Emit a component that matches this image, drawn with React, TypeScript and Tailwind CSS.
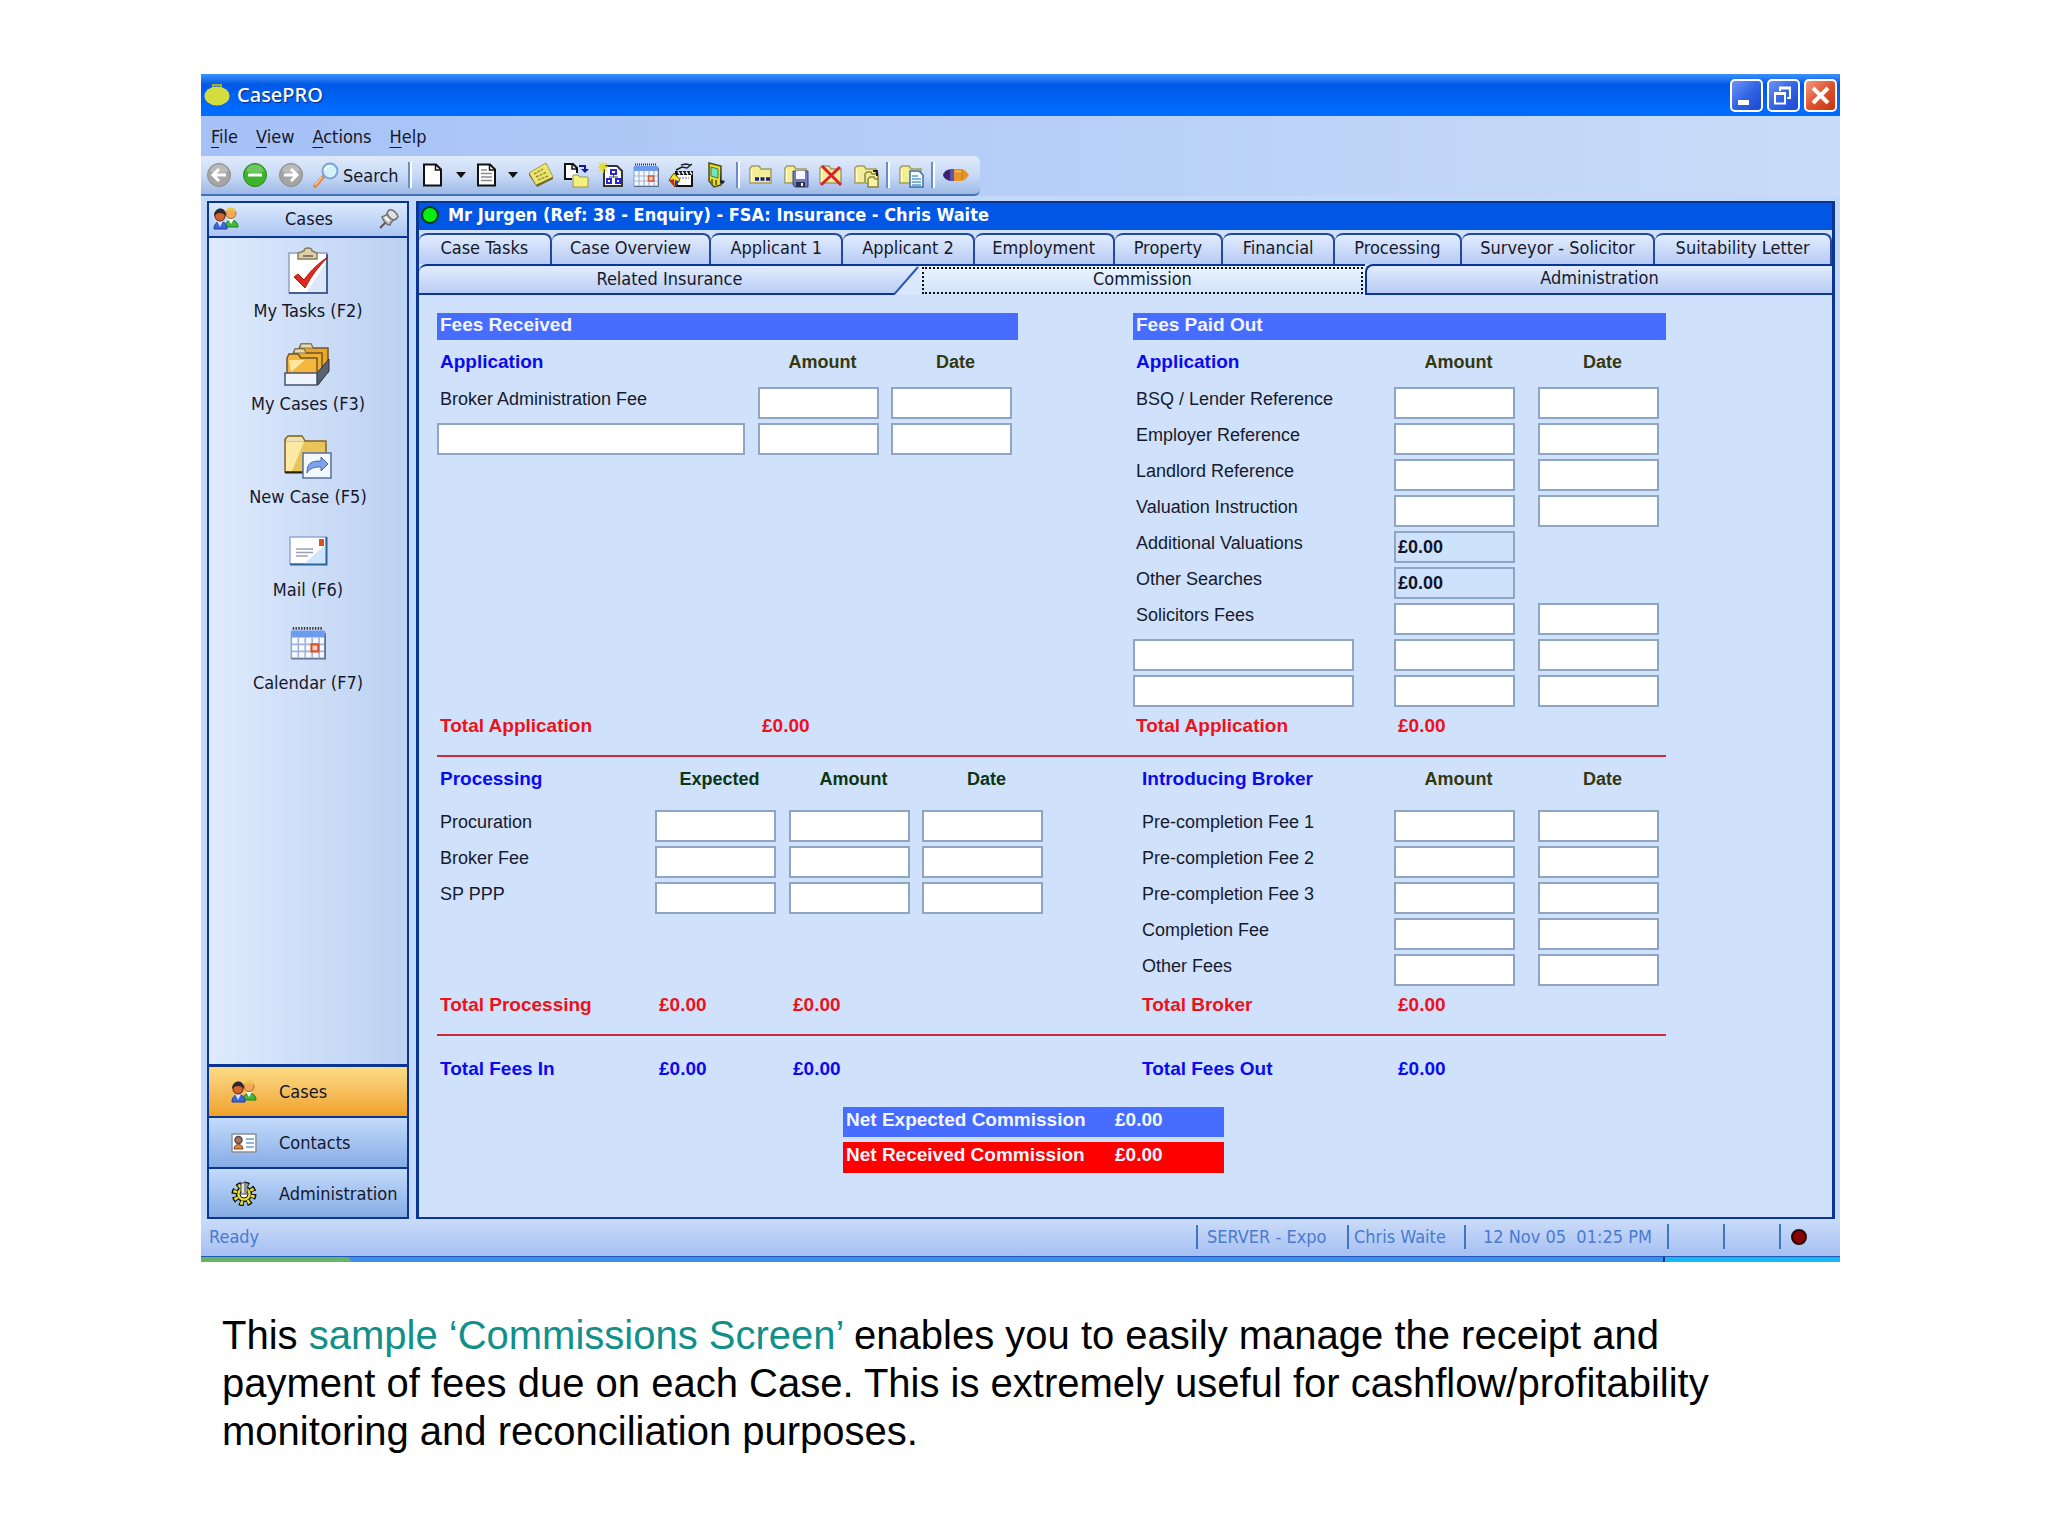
import type { ReactNode } from 'react';

const amountBox = 'h-8 w-full border-2 border-[#8ea6c4] bg-white px-1 text-[18px] font-bold text-[#10132a] outline-none';

const Svg = ({ size = 26, box = 26, children }: { size?: number; box?: number; children: ReactNode }) => (
    <svg width={size} height={size} viewBox={`0 0 ${box} ${box}`} fill="none" aria-hidden="true">
        {children}
    </svg>
);

const RoundIcon = ({ color, edge, d }: { color: string; edge: string; d: string }) => (
    <Svg>
        <circle cx="13" cy="13" r="11.500" fill={color} stroke={edge} strokeWidth="1" />
        <path d="M4 9a9.500 9.500 0 0 1 18 0c-5 3-12 3-18 0z" fill="#fff" opacity=".25" />
        <path d={d} stroke="#fff" strokeWidth="3" />
    </Svg>
);

const SearchIcon = () => (
    <Svg>
        <path d="M2 24l8-9" stroke="#e08a45" strokeWidth="4" strokeLinecap="round" />
        <path d="M2 23l7-8" stroke="#f8c79a" strokeWidth="1.500" />
        <circle cx="17" cy="9" r="7.500" fill="#d3f1fd" stroke="#7ea3d8" strokeWidth="2" />
        <path d="M12 8a5 5 0 0 1 5-4" stroke="#fff" strokeWidth="2" />
    </Svg>
);

const PageIcon = ({ lines }: { lines?: boolean }) => (
    <Svg>
        <path d="M4 2.500h12l5 5v16H4z" fill="#fff" stroke="#111" strokeWidth="2" />
        <path d="M15.500 3v5h5" stroke="#111" strokeWidth="1.500" />
        {lines && <path d="M7 8h6M7 11.500h11M7 15h11M7 18.500h11" stroke="#8c8c8c" strokeWidth="1.500" />}
    </Svg>
);

const NoteIcon = () => (
    <Svg>
        <path d="M1 11L18 1l7 14L8 23z" fill="#ece66c" stroke="#a39c45" strokeWidth="1" />
        <path d="M1 11l7 12 17-8v2L9 25 1 13z" fill="#6f692b" />
        <path d="M6 12l9-5M8 15l11-5M10 18l10-4" stroke="#96903d" strokeWidth="1.500" strokeDasharray="3 1" />
    </Svg>
);

const MoveIcon = () => (
    <Svg>
        <path d="M9 17H2V2h8l4 4v5" fill="#fff" stroke="#111" strokeWidth="2" />
        <path d="M9 2v5h5" stroke="#111" strokeWidth="1.500" />
        <path d="M16 4h6v3" stroke="#17179a" strokeWidth="2" />
        <path d="M18 7h8l-4 4z" fill="#17179a" />
        <path d="M10 13h5l2 2h8v10H10z" fill="#f5f07c" stroke="#9c964a" strokeWidth="1" />
    </Svg>
);

const DiagramIcon = () => (
    <Svg>
        <path d="M6 4h13l5 5v15H6z" fill="#fff" stroke="#333" strokeWidth="2" />
        <path d="M13 8h5v4h-5zM9 17h4v4H9zM18 17h4v4h-4z" stroke="#2929c9" strokeWidth="2" />
        <path d="M15.500 12v3M11 15h9" stroke="#444" />
        <path d="M5 0v11M0 5h10M1 1l8 8M9 1L1 9" stroke="#e2d92c" strokeWidth="1.500" />
    </Svg>
);

const CalendarIcon = ({ size = 26 }: { size?: number }) => (
    <Svg size={size}>
        <path d="M1 5h24v19H1z" fill="#f8faff" stroke="#86a0cd" strokeWidth="1" />
        <path d="M1 4h24v5H1z" fill="#6f9bee" />
        <path d="M2 2.500h22" stroke="#333" strokeWidth="2" strokeDasharray="1 1" />
        <path d="M1 14h24M1 19h24M6 9v15M11 9v15M16 9v15M21 9v15" stroke="#9fb5dc" strokeWidth="1.200" />
        <path d="M15.500 14h5v5h-5z" fill="#f6d5c8" stroke="#d9532c" strokeWidth="1.600" />
        <path d="M1 24.500h24.500V6" stroke="#5f6e8c" />
    </Svg>
);

const ClapperIcon = () => (
    <Svg>
        <path d="M8 12h16v12H9z" fill="#fff" stroke="#111" strokeWidth="2" />
        <path d="M7 9h18v4H7z" fill="#111" />
        <path d="M10 9.500l2 3M14 9.500l2 3M18 9.500l2 3M22 9.500l2 3" stroke="#fff" strokeWidth="1.500" />
        <path d="M8 8l6-3 5 1 5-4M13 3l5-1 4 1" stroke="#222" strokeWidth="1.500" />
        <path d="M11 16h10" stroke="#999" strokeWidth="1.500" strokeDasharray="2 1" />
        <path d="M6 11l6 7-5 7-6-7z" fill="#f4e422" stroke="#5d5410" />
        <path d="M1 18l5-1 1 8z" fill="#d4222a" />
        <path d="M7 18l4 1-4 6z" fill="#2634c6" />
    </Svg>
);

const DoorIcon = () => (
    <Svg>
        <path d="M6 1l12 3v19l-7 2-5-6z" fill="#e8dc2e" stroke="#4d4916" strokeWidth="1.500" />
        <path d="M8 5l7 2v9l-7-2z" fill="#72e4c8" stroke="#38833f" />
        <path d="M18 4v14l4 1-2 3-3-1z" fill="#222" />
        <path d="M9 17v5M13 18v5" stroke="#77701b" strokeWidth="2" />
    </Svg>
);

const FolderIcon = ({ children }: { children: ReactNode }) => (
    <Svg>
        <path d="M2 21V6l2-2h7l2 3h10v14z" fill="#f3ee96" stroke="#a39c5c" strokeWidth="1.500" />
        <path d="M3.500 20V7" stroke="#fffde0" strokeWidth="1.500" />
        {children}
    </Svg>
);

const PencilIcon = () => (
    <Svg>
        <path d="M0 13c1-4 5-6 10-6v12c-5 0-9-2-10-6z" fill="#3a2375" />
        <path d="M7 7h4v12H7z" fill="#6650ad" />
        <path d="M11 7h8c4 1 5 4 7 6-2 2-3 5-7 6h-8z" fill="#e6952a" />
        <path d="M12 9.500h7" stroke="#f7c67a" strokeWidth="1.500" />
        <path d="M19 8v10" stroke="#c77816" />
    </Svg>
);

const PeopleIcon = () => (
    <Svg>
        <path d="M12 21c0-9 13-9 13 0z" fill="#3fb83b" stroke="#1e7c22" />
        <path d="M15 13l3 5 3-5z" fill="#fff" />
        <circle cx="18" cy="7.500" r="5" fill="#f3a95b" stroke="#b06a1d" />
        <path d="M13 6c0-6 10-6 10 0-3-2-7-2-10 0z" fill="#efc544" />
        <path d="M1 23c0-10 13-10 13 0z" fill="#3e67dc" stroke="#1c3ba0" />
        <path d="M4 15l3 6 3-6z" fill="#d6e2ff" />
        <circle cx="7" cy="10" r="5" fill="#d4652b" stroke="#5d1f10" />
        <path d="M1 10c0-10 13-10 12 0-3-4-9-4-12 0z" fill="#2d2730" />
    </Svg>
);

const PinIcon = () => (
    <svg width="20" height="20" viewBox="0 0 20 20" fill="none" aria-hidden="true">
        <path d="M1 19l6-6" stroke="#555" strokeWidth="2" />
        <path d="M3 8c3-2 6-2 8-5l6 7c-4 1-5 3-6 6-3 0-6-3-8-8z" fill="#c0c4c0" stroke="#6d716f" strokeWidth="1.500" />
        <path d="M10 1c4-1 8 3 9 7l-4 3c-4-1-6-4-7-7z" fill="#dfe2df" stroke="#6d716f" strokeWidth="1.500" />
        <path d="M6 8l4 4" stroke="#fff" strokeWidth="2" />
    </svg>
);

const ContactIcon = () => (
    <Svg>
        <path d="M1 4h24v18H1z" fill="#fff" stroke="#8d8f96" strokeWidth="1.500" />
        <circle cx="7.500" cy="10" r="3.500" fill="#b0705a" stroke="#4d4c50" strokeWidth="1.500" />
        <path d="M3 19c0-6 9-6 9 0z" fill="#dd8340" stroke="#774624" />
        <path d="M15 9h8M15 13h8M15 17h8" stroke="#6f9fd0" strokeWidth="1.500" />
    </Svg>
);

const GearIcon = () => (
    <Svg>
        <circle cx="13" cy="14" r="9.500" stroke="#111" strokeWidth="6" strokeDasharray="4.500 2.960" />
        <circle cx="13" cy="14" r="7.500" fill="#e6df2c" stroke="#111" strokeWidth="1.500" />
        <circle cx="13" cy="14" r="9" stroke="#e6df2c" strokeWidth="4" strokeDasharray="2.500 4.570" strokeDashoffset="-1" />
        <circle cx="13" cy="14" r="4" fill="#fff" stroke="#111" />
        <path d="M10 3h6v11h-6z" fill="#e4e7ea" stroke="#444" />
        <path d="M14 3v11" stroke="#8b8f94" strokeWidth="2" />
    </Svg>
);

const TasksIcon = () => (
    <Svg size={48} box={48}>
        <path d="M5 6h38v40H5z" fill="#fff" stroke="#8ea0c2" strokeWidth="1.500" />
        <path d="M7 46h36V14L22 46z" fill="#dce7f8" />
        <path d="M43 7v39H5" stroke="#44618f" strokeWidth="2" />
        <path d="M14 12V6l6-2c0-4 8-4 8 0l5 2v6z" fill="#ded1a6" stroke="#857b5e" strokeWidth="1.500" />
        <path d="M19 9h10" stroke="#857b5e" strokeWidth="2" />
        <path d="M10 30l4-3 6 6C27 23 36 15 44 10c-9 9-17 19-23 31z" fill="#e02a1f" stroke="#aa1711" />
    </Svg>
);

const CasesIcon = () => (
    <Svg size={48} box={48}>
        <path d="M15 9l2-5h10l2 4h15v24H18z" fill="#eba52a" stroke="#6e5527" strokeWidth="1.500" />
        <path d="M17 4h10l2 4H16z" fill="#e8dcae" stroke="#857b5e" />
        <path d="M9 14l2-5h9l2 4h16v22H11z" fill="#f0ae32" stroke="#6e5527" strokeWidth="1.500" />
        <path d="M11 9h9l2 4H10z" fill="#e8dcae" stroke="#857b5e" />
        <path d="M3 18l2-4h9l3 4h16v18H3z" fill="#f4b63c" stroke="#6e5527" strokeWidth="1.500" />
        <path d="M5 20h16L7 32z" fill="#fde6a0" />
        <path d="M33 33l12-14v12L34 45z" fill="#59626f" stroke="#2b3038" />
        <path d="M1 33h32v12H1z" fill="#eef3fc" stroke="#47536c" strokeWidth="1.500" />
    </Svg>
);

const NewCaseIcon = () => (
    <Svg size={48} box={48}>
        <path d="M1 39V6l3-3h14l3 5h21v31z" fill="#e9c35c" stroke="#806628" strokeWidth="1.500" />
        <path d="M2 38V9h18L8 38z" fill="#fbe9a4" />
        <path d="M2 8l2-4h14l2 4z" fill="#efe2b2" />
        <path d="M1 39.500h19" stroke="#2b220a" strokeWidth="2" />
        <path d="M19 20h28v25H19z" fill="#f3f7fe" stroke="#54709f" strokeWidth="1.500" />
        <path d="M23 40c0-10 4-12 14-12v-4l7 7-7 7v-4c-7 0-11 1-14 6z" fill="#7fa2e8" stroke="#4468bb" />
    </Svg>
);

const MailIcon = () => (
    <Svg size={48} box={48}>
        <path d="M6 11h36v27H6z" fill="#fff" stroke="#93a8d0" strokeWidth="1.500" />
        <path d="M42 38H20l22-20z" fill="#cfe5fa" />
        <path d="M42.500 11v27.500H6" stroke="#2f639c" strokeWidth="2" />
        <path d="M35 13h5v7h-5z" fill="#dc4f25" />
        <path d="M12 23h17M12 26.500h17M12 30h12" stroke="#99a0b5" strokeWidth="1.500" />
    </Svg>
);

const sideItems = [
    { label: 'My Tasks (F2)', icon: <TasksIcon /> },
    { label: 'My Cases (F3)', icon: <CasesIcon /> },
    { label: 'New Case (F5)', icon: <NewCaseIcon /> },
    { label: 'Mail (F6)', icon: <MailIcon /> },
    { label: 'Calendar (F7)', icon: <CalendarIcon size={36} /> },
];

const topTabs = [
    'Case Tasks', 'Case Overview', 'Applicant 1', 'Applicant 2', 'Employment',
    'Property', 'Financial', 'Processing', 'Surveyor - Solicitor', 'Suitability Letter',
];

const Tool = ({ name, children }: { name: string; children: ReactNode }) => (
    <button type="button" aria-label={name} className="flex w-[35px] justify-center">{children}</button>
);

const Separator = () => (
    <div className="flex w-[10px] justify-center">
        <div className="h-[26px] w-[2px] bg-[#6a8ccb]" />
        <div className="h-[26px] w-[2px] bg-white" />
    </div>
);

const Caret = ({ name }: { name: string }) => (
    <button type="button" aria-label={name} className="flex w-5 justify-center">
        <svg width="10" height="6" viewBox="0 0 10 6" aria-hidden="true"><path d="M0 0h10L5 6z" fill="#111" /></svg>
    </button>
);

const MenuItem = ({ text }: { text: string }) => (
    <button type="button"><span className="underline underline-offset-4">{text[0]}</span>{text.slice(1)}</button>
);

const Toolbar = () => (
    <div className="flex h-10 w-[779px] items-center rounded-r-md border-b-2 border-[#4a71b4] bg-linear-to-b from-[#e0eafb] via-[#c9daf6] to-[#9db9e6]">
        <button type="button" aria-label="Back" className="flex w-9 justify-center"><RoundIcon color="#a5a5a5" edge="#8d8d8d" d="M20 13H8M13 7l-6 6 6 6" /></button>
        <button type="button" aria-label="Home" className="flex w-9 justify-center"><RoundIcon color="#3fb32c" edge="#2b8420" d="M6 13h14" /></button>
        <button type="button" aria-label="Forward" className="flex w-9 justify-center"><RoundIcon color="#a5a5a5" edge="#8d8d8d" d="M6 13h12M13 7l6 6-6 6" /></button>
        <button type="button" className="flex w-24 items-center gap-1 pl-1"><SearchIcon />Search</button>
        <Separator />
        <button type="button" aria-label="New" className="flex w-9 justify-center"><PageIcon /></button>
        <Caret name="New options" />
        <button type="button" aria-label="Document" className="flex w-8 justify-center"><PageIcon lines /></button>
        <Caret name="Document options" />
        <Tool name="Note"><NoteIcon /></Tool>
        <Tool name="Move"><MoveIcon /></Tool>
        <Tool name="Diagram"><DiagramIcon /></Tool>
        <Tool name="Calendar"><CalendarIcon /></Tool>
        <Tool name="Action"><ClapperIcon /></Tool>
        <Tool name="Exit"><DoorIcon /></Tool>
        <Separator />
        <Tool name="Open case">
            <FolderIcon><path d="M7 17h4M12.500 17h4M18 17h4" stroke="#1c1c8c" strokeWidth="3.500" /></FolderIcon>
        </Tool>
        <Tool name="Save case">
            <FolderIcon>
                <path d="M10 9h15v16H12l-2-2z" fill="#6f7ac0" stroke="#3c4580" />
                <path d="M13 9h9v8h-9z" fill="#f4f7ff" />
                <path d="M13 20h9v5h-9z" fill="#2c3350" />
                <path d="M18 21h2v3h-2z" fill="#fff" />
            </FolderIcon>
        </Tool>
        <Tool name="Delete case">
            <FolderIcon><path d="M4 4l19 19M22 5L3 23" stroke="#d92335" strokeWidth="3" /></FolderIcon>
        </Tool>
        <Tool name="Copy case">
            <FolderIcon>
                <path d="M12 20v-8l2-2h4l1 2h6v7" fill="#f3ee96" stroke="#8a8346" strokeWidth="1.500" />
                <path d="M15 25v-8l2-2h4l1 2h3v8z" fill="#f8f4a4" stroke="#8a8346" strokeWidth="1.500" />
                <path d="M20 9h4v5" stroke="#222" strokeWidth="2" />
            </FolderIcon>
        </Tool>
        <Separator />
        <Tool name="Case document">
            <FolderIcon>
                <path d="M12 9h9l4 4v12H12z" fill="#f5faff" stroke="#3a6ea8" strokeWidth="1.500" />
                <path d="M14 14h6M14 17h9M14 20h9M14 23h9" stroke="#5f9bd6" strokeWidth="1.500" />
            </FolderIcon>
        </Tool>
        <Separator />
        <Tool name="Edit"><PencilIcon /></Tool>
    </div>
);

const Sidebar = () => (
    <aside className="flex w-[202px] shrink-0 flex-col border-2 border-[#0a3593] bg-linear-to-r from-[#dfebfe] to-[#bcd1f1]">
        <div className="flex h-[35px] items-center justify-between border-b-2 border-[#0a3593] bg-linear-to-b from-[#dce9fd] to-[#acc6f1] pr-2 pb-[2px] pl-1">
            <PeopleIcon />
            <h2>Cases</h2>
            <button type="button" aria-label="Pin"><PinIcon /></button>
        </div>
        <nav className="flex flex-1 flex-col pt-[9px]">
            {sideItems.map((item) => (
                <button type="button" key={item.label} className="flex h-[93px] flex-col items-center gap-1">
                    <span className="flex h-12 items-center">{item.icon}</span>
                    <span className="leading-6">{item.label}</span>
                </button>
            ))}
        </nav>
        <button type="button" className="flex h-[52px] items-center gap-[22px] border-t-3 border-[#0a3593] bg-linear-to-b from-[#fcdc86] to-[#efa124] pl-[22px]">
            <PeopleIcon />Cases
        </button>
        <button type="button" className="flex h-[51px] items-center gap-[22px] border-t-2 border-[#0a3593] bg-linear-to-b from-[#c3dbfb] to-[#86ace5] pl-[22px]">
            <ContactIcon />Contacts
        </button>
        <button type="button" className="flex h-[50px] items-center gap-[22px] border-t-2 border-[#0a3593] bg-linear-to-b from-[#c3dbfb] to-[#86ace5] pl-[22px]">
            <GearIcon />Administration
        </button>
    </aside>
);

const Tabs = () => (
    <div role="tablist" className="bg-[#cfe0fc] pt-[3px] leading-6">
        <div className="grid grid-cols-[133fr_160fr_132fr_132fr_140fr_109fr_112fr_127fr_194fr_177fr]">
            {topTabs.map((tab) => (
                <button type="button" role="tab" key={tab} className="h-[31px] rounded-t-lg border-t-2 border-r-2 border-[#24479f] bg-linear-to-b from-[#e2ecfe] to-[#b7cbf4] pb-1 whitespace-nowrap">
                    {tab}
                </button>
            ))}
        </div>
        <div className="grid grid-cols-[502fr_446fr_468fr]">
            <button type="button" role="tab" className="relative h-[31px] rounded-tl-lg border-t-2 border-[#0a3593] bg-linear-to-b from-[#e2ecfe] to-[#b7cbf4] pb-1">
                <span className="absolute inset-x-0 bottom-0 h-[2px] bg-[#0a3593]" />
                Related Insurance
                <svg className="absolute right-0 bottom-0" width="26" height="29" viewBox="0 0 26 29" aria-hidden="true">
                    <path d="M0 29L24 0h2v29z" fill="#d9e8fd" />
                    <path d="M0 28.500L24 1" stroke="#2c53b4" strokeWidth="2" />
                </svg>
            </button>
            <div className="border-t-2 border-[#0a3593] bg-linear-to-b from-[#ebf3fe] to-[#d1e3fc] px-[2px] pt-px">
                <button type="button" role="tab" aria-selected="true" className="block h-[27px] w-full border-2 border-dotted border-[#111] pb-1 leading-5">
                    Commission
                </button>
            </div>
            <button type="button" role="tab" className="h-[31px] rounded-tl-lg border-2 border-r-0 border-[#0a3593] bg-linear-to-b from-[#e2ecfe] to-[#b7cbf4] pb-1">
                Administration
            </button>
        </div>
    </div>
);

const ColumnHeads = ({ title, heads, pad, grid, color }: { title: string; heads: string[]; pad: string; grid: string; color: string }) => (
    <div className={`grid h-11 items-center ${grid}`}>
        <h3 className={`text-[19px] font-bold text-[#0a0af0] ${pad}`}>{title}</h3>
        {heads.map((head) => (
            <div key={head} className={`w-[121px] pl-2 text-center text-[18px] font-bold ${color}`}>{head}</div>
        ))}
    </div>
);

type RowProps = { label?: string; name: string; cols: string[]; grid: string; pad: string; wide?: string; value?: string };

const FeeRow = ({ label, name, cols, grid, pad, wide, value }: RowProps) => {
    const id = name.toLowerCase().replace(/[^a-z0-9]+/g, '-');
    return (
        <div className={`grid h-9 items-start ${grid}`}>
            {label ? (
                <label htmlFor={id} className={`text-[18px] leading-6 whitespace-nowrap ${pad}`}>{label}</label>
            ) : (
                <input aria-label={`${name} description`} className={`${amountBox} ${wide}`} />
            )}
            {cols.map((col, i) => (
                <div key={col} className="w-[121px]">
                    {value ? (
                        <input id={id} readOnly value={value} className="h-8 w-full border-2 border-[#8ea6c4] bg-[#cfe2fc] px-[2px] text-[18px] font-bold text-[#10132a] outline-none" />
                    ) : (
                        <input id={i === 0 ? id : `${id}-${col}`} aria-label={i === 0 && label ? undefined : `${name} ${col}`} className={amountBox} />
                    )}
                </div>
            ))}
        </div>
    );
};

const TotalRow = ({ label, values, grid, pad, color }: { label: string; values: string[]; grid: string; pad: string; color: string }) => (
    <div className={`grid h-[30px] items-center text-[19px] font-bold ${grid} ${color}`}>
        <div className={pad}>{label}</div>
        {values.map((value, i) => <div key={i} className="pl-1">{value}</div>)}
    </div>
);

const receivedGrid = 'grid-cols-[321px_133px_121px]';
const processingGrid = 'grid-cols-[218px_134px_133px_121px]';
const paidGrid = 'grid-cols-[261px_144px_121px]';
const olive = 'text-[#35370f]';
const green = 'text-[#0c3513]';

const CommissionForm = () => (
    <form className="ml-[18px] w-[1229px] pt-[18px] pb-11 font-['Liberation_Sans',Arial,sans-serif] text-[#161a2c]">
        <div className="grid grid-cols-[696px_533px] border-b-2 border-[#d3283b] pb-[14px]">
            <section className="flex flex-col">
                <h2 className="h-[27px] w-[581px] bg-[#466dff] pl-[3px] text-[19px] leading-6 font-bold text-[#f2f5ff]">Fees Received</h2>
                <ColumnHeads title="Application" heads={['Amount', 'Date']} grid={receivedGrid} pad="pl-[3px]" color={olive} />
                <div className="pt-[3px]">
                    <FeeRow label="Broker Administration Fee" name="Broker Administration Fee" cols={['amount', 'date']} grid={receivedGrid} pad="pl-[3px]" />
                    <FeeRow name="Received extra" cols={['amount', 'date']} grid={receivedGrid} pad="" wide="max-w-[308px]" />
                </div>
                <div className="mt-auto">
                    <TotalRow label="Total Application" values={['£0.00']} grid={receivedGrid} pad="pl-[3px]" color="text-[#ee1119]" />
                </div>
            </section>
            <section>
                <h2 className="h-[27px] bg-[#466dff] pl-[3px] text-[19px] leading-6 font-bold text-[#f2f5ff]">Fees Paid Out</h2>
                <ColumnHeads title="Application" heads={['Amount', 'Date']} grid={paidGrid} pad="pl-[3px]" color={olive} />
                <div className="pt-[3px]">
                    {['BSQ / Lender Reference', 'Employer Reference', 'Landlord Reference', 'Valuation Instruction'].map((label) => (
                        <FeeRow key={label} label={label} name={label} cols={['amount', 'date']} grid={paidGrid} pad="pl-[3px]" />
                    ))}
                    <FeeRow label="Additional Valuations" name="Additional Valuations" cols={['amount']} value="£0.00" grid={paidGrid} pad="pl-[3px]" />
                    <FeeRow label="Other Searches" name="Other Searches" cols={['amount']} value="£0.00" grid={paidGrid} pad="pl-[3px]" />
                    <FeeRow label="Solicitors Fees" name="Solicitors Fees" cols={['amount', 'date']} grid={paidGrid} pad="pl-[3px]" />
                    <FeeRow name="Paid extra 1" cols={['amount', 'date']} grid={paidGrid} pad="" wide="max-w-[221px]" />
                    <FeeRow name="Paid extra 2" cols={['amount', 'date']} grid={paidGrid} pad="" wide="max-w-[221px]" />
                </div>
                <TotalRow label="Total Application" values={['£0.00']} grid={paidGrid} pad="pl-[3px]" color="text-[#ee1119]" />
            </section>
        </div>

        <div className="grid grid-cols-[696px_533px] border-b-2 border-[#d3283b] pb-[14px]">
            <section className="flex flex-col">
                <ColumnHeads title="Processing" heads={['Expected', 'Amount', 'Date']} grid={processingGrid} pad="pl-[3px]" color={green} />
                <div className="pt-[9px]">
                    {['Procuration', 'Broker Fee', 'SP PPP'].map((label) => (
                        <FeeRow key={label} label={label} name={label} cols={['expected', 'amount', 'date']} grid={processingGrid} pad="pl-[3px]" />
                    ))}
                </div>
                <div className="mt-auto">
                    <TotalRow label="Total Processing" values={['£0.00', '£0.00']} grid={processingGrid} pad="pl-[3px]" color="text-[#ee1119]" />
                </div>
            </section>
            <section>
                <ColumnHeads title="Introducing Broker" heads={['Amount', 'Date']} grid={paidGrid} pad="pl-[9px]" color={olive} />
                <div className="pt-[9px]">
                    {['Pre-completion Fee 1', 'Pre-completion Fee 2', 'Pre-completion Fee 3', 'Completion Fee', 'Other Fees'].map((label) => (
                        <FeeRow key={label} label={label} name={label} cols={['amount', 'date']} grid={paidGrid} pad="pl-[9px]" />
                    ))}
                </div>
                <TotalRow label="Total Broker" values={['£0.00']} grid={paidGrid} pad="pl-[9px]" color="text-[#ee1119]" />
            </section>
        </div>

        <div className="grid grid-cols-[696px_533px] pt-[18px]">
            <TotalRow label="Total Fees In" values={['£0.00', '£0.00']} grid={processingGrid} pad="pl-[3px]" color="text-[#0a0af0]" />
            <TotalRow label="Total Fees Out" values={['£0.00']} grid={paidGrid} pad="pl-[9px]" color="text-[#0a0af0]" />
        </div>

        <div className="mt-[23px] ml-[406px] flex w-[381px] flex-col gap-[5px] text-[19px] leading-[26px] font-bold text-[#f4f6ff]">
            <div className="grid h-[30px] grid-cols-[269px_1fr] bg-[#466dff] pl-[3px]"><span>Net Expected Commission</span><span>£0.00</span></div>
            <div className="grid h-[31px] grid-cols-[269px_1fr] bg-[#ff0000] pl-[3px]"><span>Net Received Commission</span><span>£0.00</span></div>
        </div>
    </form>
);

const StatusBar = () => (
    <footer className="flex h-[37px] items-center justify-between bg-linear-to-b from-[#cbdcf9] to-[#a6c0f2] pb-[2px] pl-2 text-[#4a7bcf]">
        <span>Ready</span>
        <div className="flex h-[25px] items-center leading-6">
            <span className="w-[151px] border-l-2 border-[#3f74c6] pl-[9px]">SERVER - Expo</span>
            <span className="w-[117px] border-l-2 border-[#3f74c6] pl-[5px]">Chris Waite</span>
            <span className="w-[203px] border-l-2 border-[#3f74c6] pl-[17px] whitespace-pre">12 Nov 05  01:25 PM</span>
            <span className="h-full w-14 border-l-2 border-[#3f74c6]" />
            <span className="h-full w-14 border-l-2 border-[#3f74c6]" />
            <span className="flex h-full w-[61px] items-center border-l-2 border-[#3f74c6] pl-[10px]">
                <span className="size-4 rounded-full border-2 border-[#2a0508] bg-[#8b0000]" />
            </span>
        </div>
    </footer>
);

const TitleBar = () => (
    <header className="flex h-[42px] items-center justify-between bg-linear-to-b from-[#3c92fb] via-[#0058e6] via-25% to-[#006bff] to-85% px-[3px]">
        <div className="flex items-center gap-[7px]">
            <svg width="26" height="22" viewBox="0 0 26 22" aria-hidden="true">
                <path d="M9 4V1h8v3" stroke="#a9ad2f" strokeWidth="2" fill="none" />
                <ellipse cx="13" cy="12" rx="12.500" ry="9.500" fill="#d4dc3f" />
            </svg>
            <h1 className="font-['Noto_Sans',sans-serif] text-[20px] font-medium text-white [text-shadow:1px_1px_1px_#0a2a80]">CasePRO</h1>
        </div>
        <div className="flex gap-1">
            <button type="button" aria-label="Minimise" className="flex size-[33px] items-center justify-center rounded-[5px] border-2 border-white bg-linear-to-br from-[#6f93f2] via-[#3264e6] to-[#1c48cf]">
                <svg width="29" height="29" viewBox="0 0 29 29" aria-hidden="true"><path d="M6 19h11v5H6z" fill="#fff" /></svg>
            </button>
            <button type="button" aria-label="Restore" className="flex size-[33px] items-center justify-center rounded-[5px] border-2 border-white bg-linear-to-br from-[#6f93f2] via-[#3264e6] to-[#1c48cf]">
                <svg width="29" height="29" viewBox="0 0 29 29" fill="none" stroke="#fff" aria-hidden="true">
                    <path d="M6 12.500h10v10H6z" strokeWidth="2" />
                    <path d="M5 12.500h12M10 7h12" strokeWidth="3" />
                    <path d="M11 10V7h10v10h-3" strokeWidth="2" />
                </svg>
            </button>
            <button type="button" aria-label="Close" className="flex size-[33px] items-center justify-center rounded-[5px] border-2 border-white bg-linear-to-br from-[#f19a80] via-[#e0512d] to-[#c63410]">
                <svg width="29" height="29" viewBox="0 0 29 29" aria-hidden="true"><path d="M7 7l15 15M22 7L7 22" stroke="#fff" strokeWidth="4" /></svg>
            </button>
        </div>
    </header>
);

const App = () => {
    return (
        <main className="min-h-screen bg-white pt-[74px] pr-[208px] pl-[201px]">
            <div className="bg-linear-to-r from-[#a5c1f6] to-[#c9dcf8] font-['DejaVu_Sans_Condensed','Noto_Sans',sans-serif] text-[18px] text-[#15182b]">
                <TitleBar />
                <div className="flex h-10 items-center gap-[18px] pl-[10px]">
                    <MenuItem text="File" />
                    <MenuItem text="View" />
                    <MenuItem text="Actions" />
                    <MenuItem text="Help" />
                </div>
                <Toolbar />
                <div className="flex gap-[7px] bg-[#c3d9fa] pt-[5px] pr-[5px] pl-[6px]">
                    <Sidebar />
                    <section className="min-w-0 flex-1 border-2 border-x-3 border-[#0a3593] bg-[#d0e1fc]">
                        <div className="flex h-[27px] items-center gap-[9px] bg-[#0057e5] pb-1 pl-[2px] font-bold text-white">
                            <span className="size-[18px] rounded-full border-2 border-[#063b12] bg-[#06ee12]" />
                            <h2>Mr Jurgen (Ref: 38 - Enquiry) - FSA: Insurance - Chris Waite</h2>
                        </div>
                        <Tabs />
                        <CommissionForm />
                    </section>
                </div>
                <StatusBar />
                <div className="flex h-[6px] border-t border-[#2458b8] bg-[#3f8df0]">
                    <div className="w-[150px] rounded-tr-md bg-[#66b566]" />
                    <div className="ml-auto w-[177px] border-l-2 border-[#153b7d] bg-[#18b8f2]" />
                </div>
            </div>
            <p className="mt-[49px] mr-10 ml-[21px] pb-20 font-['Liberation_Sans',Arial,sans-serif] text-[40px] leading-12 text-black">
                This <span className="text-[#11908a]">sample ‘Commissions Screen’</span> enables you to easily manage the receipt and payment of fees due on each Case. This is extremely useful for cashflow/profitability monitoring and reconciliation purposes.
            </p>
        </main>
    );
};

export default App;
